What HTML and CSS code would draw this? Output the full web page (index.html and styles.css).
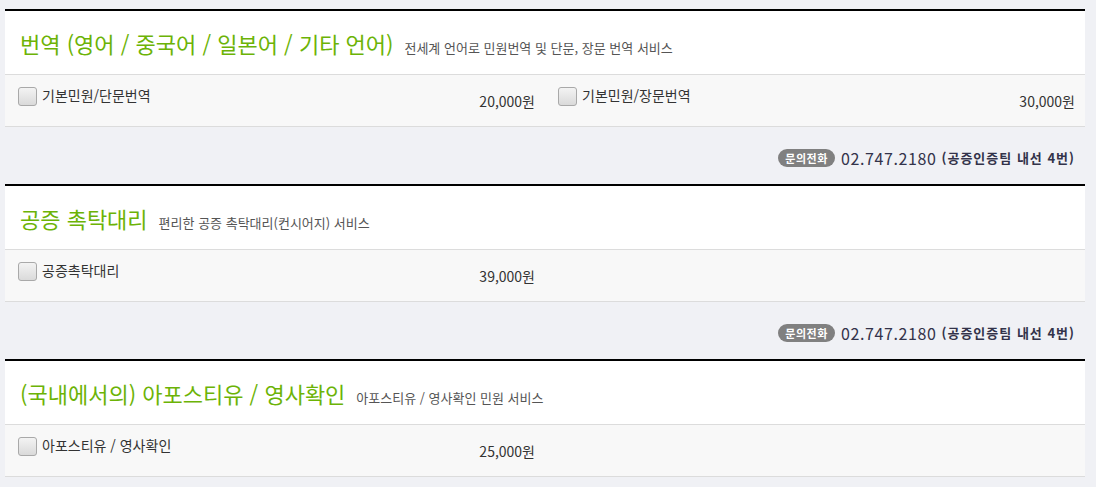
FILE: index.html
```html
<!DOCTYPE html>
<html lang="ko">
<head>
<meta charset="utf-8">
<title>서비스</title>
<link rel="stylesheet" href="styles.css">
</head>
<body>
<div class="page">
  <section class="svc">
    <div class="svc-head">
      <h2 class="svc-title">번역 (영어 / 중국어 / 일본어 / 기타 언어)</h2>
      <span class="svc-desc">전세계 언어로 민원번역 및 단문, 장문 번역 서비스</span>
    </div>
    <div class="items">
      <label class="item"><span class="chk"></span><span class="name">기본민원/단문번역</span><span class="price">20,000원</span></label>
      <label class="item"><span class="chk"></span><span class="name">기본민원/장문번역</span><span class="price">30,000원</span></label>
    </div>
    <div class="contact"><span class="badge">문의전화</span><span class="tel">02.747.2180</span><span class="ext">(공증인증팀 내선 4번)</span></div>
  </section>
  <section class="svc">
    <div class="svc-head">
      <h2 class="svc-title">공증 촉탁대리</h2>
      <span class="svc-desc">편리한 공증 촉탁대리(컨시어지) 서비스</span>
    </div>
    <div class="items">
      <label class="item"><span class="chk"></span><span class="name">공증촉탁대리</span><span class="price">39,000원</span></label>
    </div>
    <div class="contact"><span class="badge">문의전화</span><span class="tel">02.747.2180</span><span class="ext">(공증인증팀 내선 4번)</span></div>
  </section>
  <section class="svc">
    <div class="svc-head">
      <h2 class="svc-title">(국내에서의) 아포스티유 / 영사확인</h2>
      <span class="svc-desc">아포스티유 / 영사확인 민원 서비스</span>
    </div>
    <div class="items">
      <label class="item"><span class="chk"></span><span class="name">아포스티유 / 영사확인</span><span class="price">25,000원</span></label>
    </div>
  </section>
</div>
</body>
</html>
```

FILE: styles.css
```css
* { box-sizing: border-box; }
html, body { margin: 0; padding: 0; }
body {
  background: #f0f1f5;
  font-family: "Noto Sans CJK KR", "Noto Sans", sans-serif;
  color: #333;
}
.page {
  padding: 9px 11px 0 5px;
}
.svc {
  border-top: 2px solid #000;
}
.svc-head {
  background: #fff;
  height: 64px;
  border-bottom: 1px solid #dcdcdc;
  display: flex;
  align-items: baseline;
  padding: 18px 0 0 15px;
}
.svc-title {
  margin: 0;
  font-size: 22px;
  font-weight: 400;
  color: #6cb306;
  line-height: 28px;
}
.svc-desc {
  margin-left: 11px;
  font-size: 13px;
  color: #555;
}
.items {
  display: flex;
  background: #f8f8f8;
  height: 52px;
  border-bottom: 1px solid #dcdcdc;
}
.item {
  width: 540px;
  display: flex;
  align-items: flex-start;
  padding: 12px 10px 0 13px;
}
.chk {
  width: 19px;
  height: 19px;
  border: 1px solid #a9a9a9;
  border-radius: 3px;
  background: linear-gradient(#f3f3f3, #dadada);
  flex: none;
}
.name {
  margin-left: 5px;
  font-size: 14px;
  line-height: 16px;
  color: #333;
}
.price {
  margin-left: auto;
  margin-top: 6px;
  font-size: 14px;
  line-height: 16px;
  color: #333;
}
.contact {
  height: 57px;
  display: flex;
  align-items: center;
  justify-content: flex-end;
  padding: 4px 10px 0 0;
}
.badge {
  background: #808080;
  color: #fff;
  font-size: 11px;
  font-weight: 700;
  height: 18px;
  line-height: 18px;
  width: 57px;
  text-align: center;
  border-radius: 9px;
  letter-spacing: 0.5px;
}
.tel {
  margin-left: 6px;
  font-size: 16px;
  color: #33334a;
  letter-spacing: 0.6px;
}
.ext {
  margin-left: 5px;
  font-size: 13px;
  font-weight: 700;
  color: #33334a;
  letter-spacing: 1px;
}
```
